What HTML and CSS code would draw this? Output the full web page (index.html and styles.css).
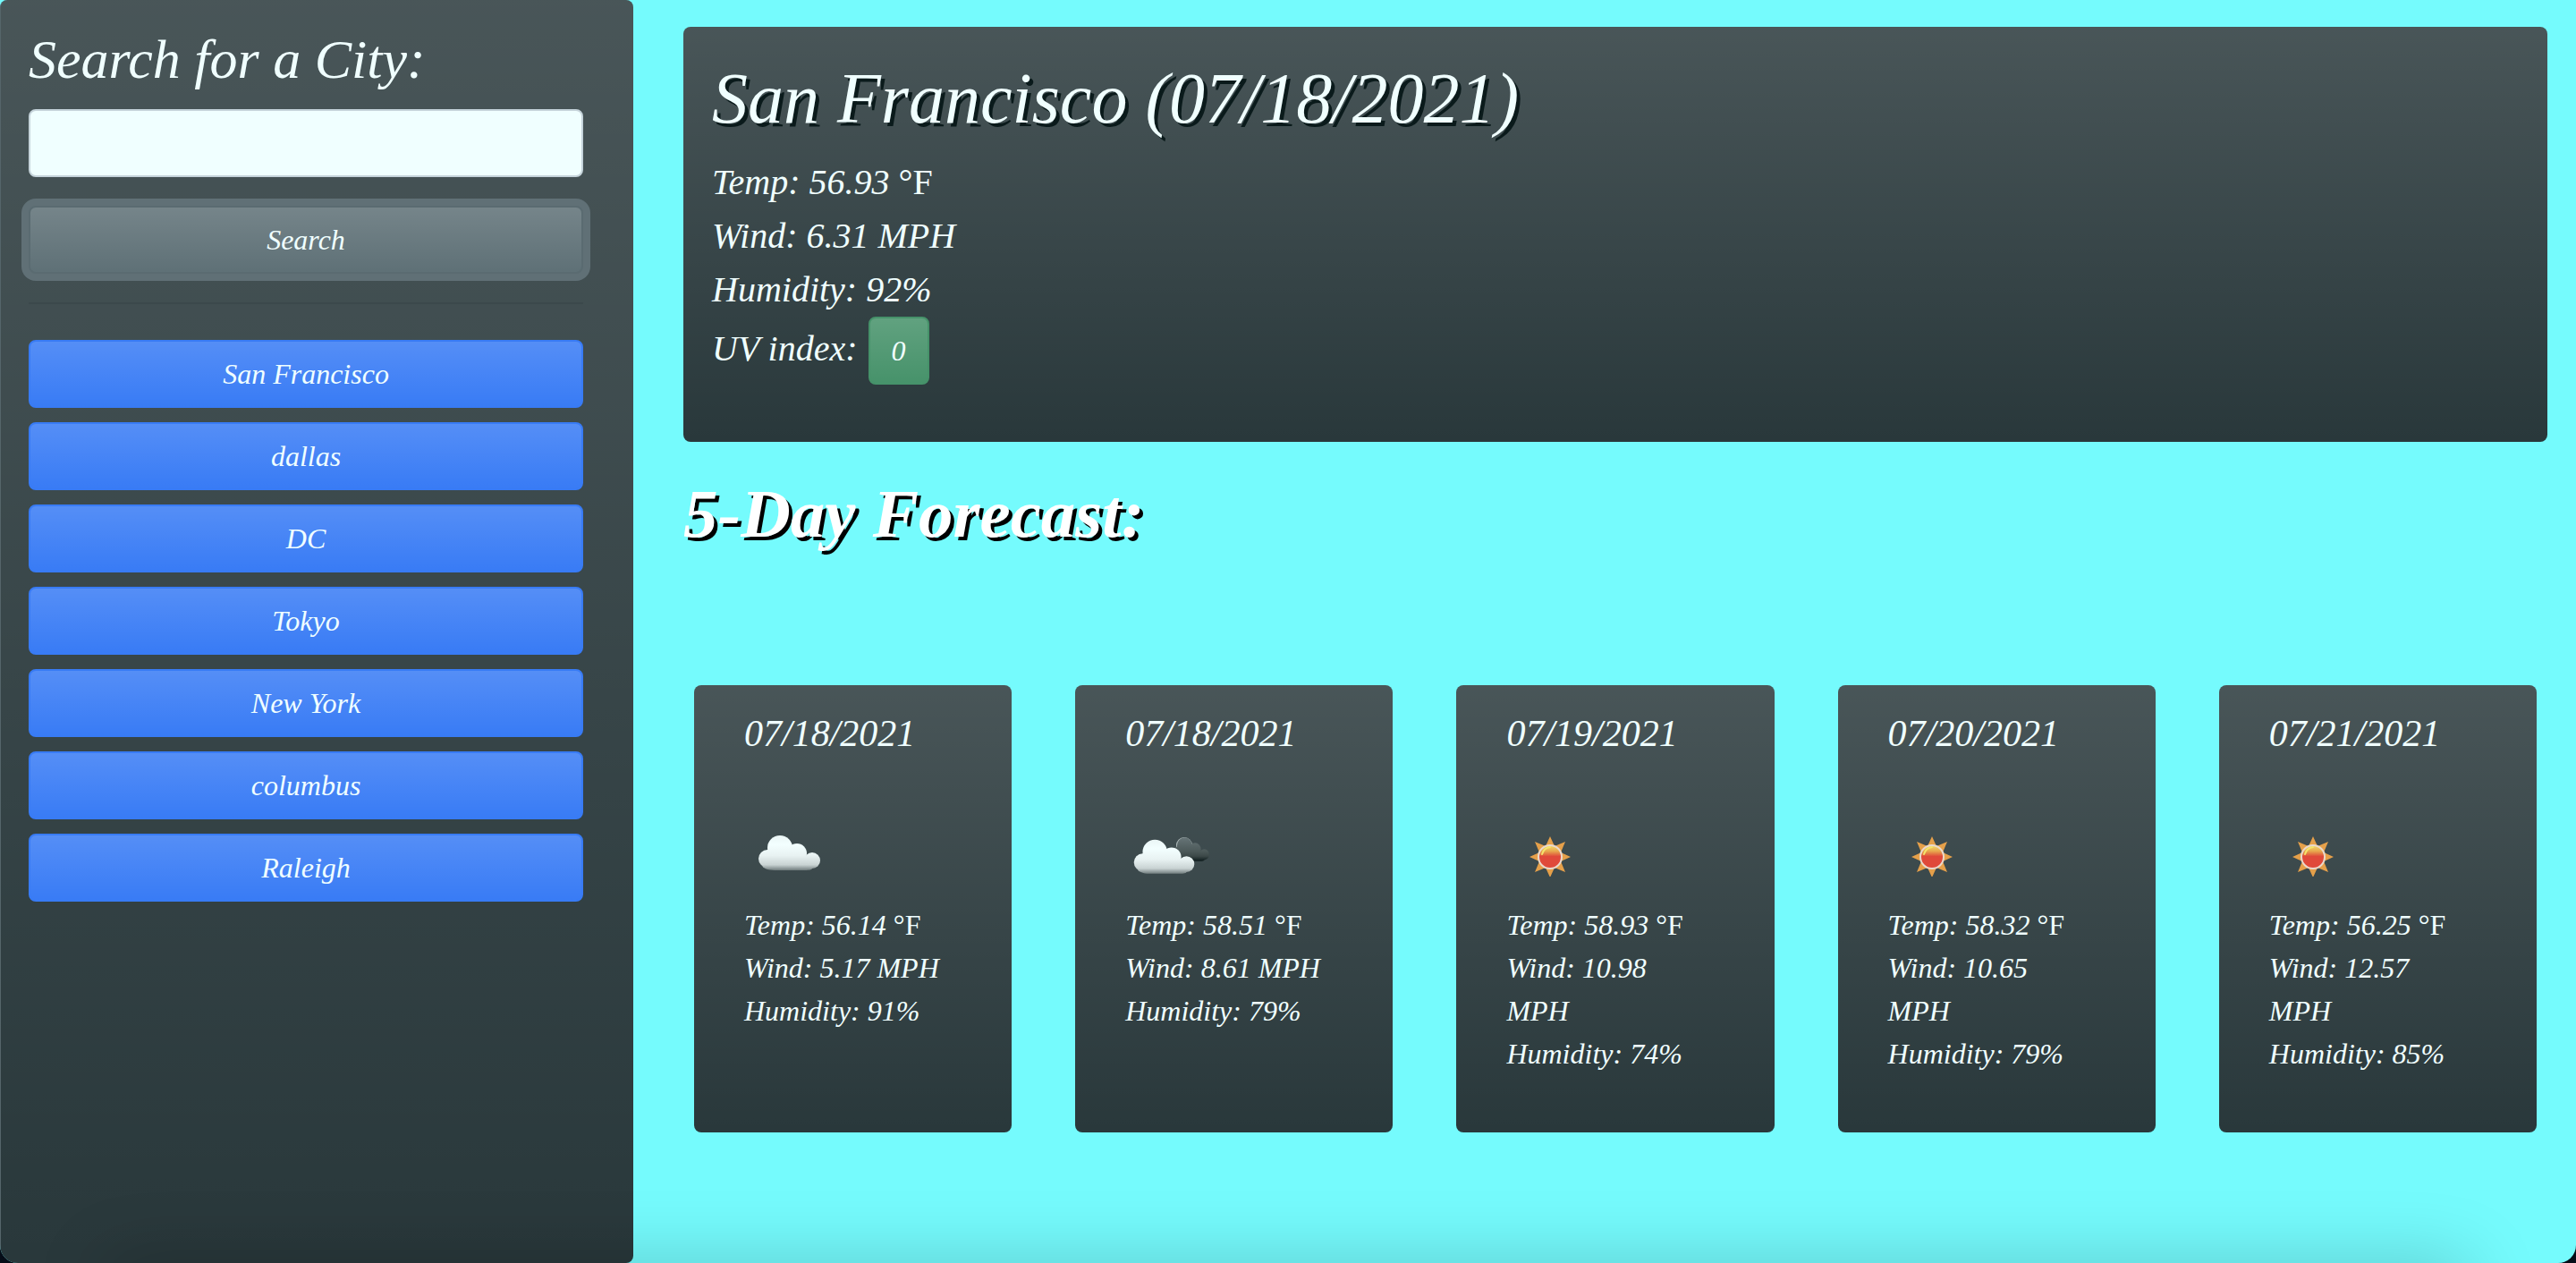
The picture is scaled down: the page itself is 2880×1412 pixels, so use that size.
FILE: index.html
```html
<!DOCTYPE html>
<html lang="en">
<head>
<meta charset="utf-8">
<meta name="viewport" content="width=device-width, initial-scale=1">
<title>Weather Dashboard</title>
<link rel="stylesheet" href="styles.css">
</head>
<body>
<svg class="defs" aria-hidden="true">
  <defs>
    <linearGradient id="cloudFill" x1="0" y1="16" x2="0" y2="57" gradientUnits="userSpaceOnUse">
      <stop offset="0" stop-color="#e9f4f4"/>
      <stop offset=".3" stop-color="#f3ffff"/>
      <stop offset=".6" stop-color="#e8f2f2"/>
      <stop offset=".85" stop-color="#c9d3d3"/>
      <stop offset="1" stop-color="#6f7b7c"/>
    </linearGradient>
    <linearGradient id="darkFill" x1="0" y1="16" x2="0" y2="57" gradientUnits="userSpaceOnUse">
      <stop offset="0" stop-color="#69777a"/>
      <stop offset=".6" stop-color="#4c5959"/>
      <stop offset=".8" stop-color="#3c4848"/>
      <stop offset="1" stop-color="#0c1a1b"/>
    </linearGradient>
    <linearGradient id="sunFill" x1="0" y1="0" x2="0" y2="1">
      <stop offset="0" stop-color="#f3dc6c"/>
      <stop offset=".25" stop-color="#e8a94e"/>
      <stop offset=".48" stop-color="#e0493a"/>
      <stop offset="1" stop-color="#e0493a"/>
    </linearGradient>
    <g id="cloudShape">
      <circle cx="26" cy="44" r="10"/>
      <circle cx="40" cy="32" r="14"/>
      <circle cx="59" cy="38" r="11"/>
      <circle cx="76" cy="46" r="9"/>
      <path d="M26 34l22-4 12 6 16 10v9c0 1-3 2-8 2H34c-8 0-14-3-14-6z"/>
    </g>
    <symbol id="cloud" viewBox="0 0 112 64"><use href="#cloudShape" fill="url(#cloudFill)"/></symbol>
    <symbol id="clouds" viewBox="0 0 112 64">
      <circle cx="66" cy="29" r="9" fill="#b4bfbf"/>
      <use href="#cloudShape" fill="url(#darkFill)" transform="translate(42 8) scale(.61 .68)"/>
      <use href="#cloudShape" fill="url(#cloudFill)" transform="translate(-6 5) scale(.98)"/>
    </symbol>
    <symbol id="sun" viewBox="0 0 112 64">
      <path fill="#e5a04a" d="M49 19l5 11 12-5-5 12 11 5-11 5 5 12-12-5-5 11-5-11-12 5 5-12-11-5 11-5-5-12 12 5z"/>
      <circle cx="49" cy="42" r="13" fill="url(#sunFill)" stroke="#ead9cc" stroke-width="2"/>
      <path d="M40 39q2-7 9-8" fill="none" stroke="#f4e56c" stroke-width="2" stroke-linecap="round"/>
    </symbol>
  </defs>
</svg>

<aside class="sidebar">
  <form class="search">
    <h2 class="search-title"><label for="city">Search for a City:</label></h2>
    <input class="search-input" id="city" type="text">
    <button class="btn btn-search" type="button">Search</button>
  </form>
  <hr class="divider">
  <div class="history">
    <button class="btn btn-city" type="button">San Francisco</button>
    <button class="btn btn-city" type="button">dallas</button>
    <button class="btn btn-city" type="button">DC</button>
    <button class="btn btn-city" type="button">Tokyo</button>
    <button class="btn btn-city" type="button">New York</button>
    <button class="btn btn-city" type="button">columbus</button>
    <button class="btn btn-city" type="button">Raleigh</button>
  </div>
</aside>

<main class="content">
  <section class="current panel">
    <h1 class="title">San Francisco (07/18/2021)</h1>
    <p>Temp: 56.93 <span class="unit">°F</span></p>
    <p>Wind: 6.31 MPH</p>
    <p>Humidity: 92%</p>
    <p class="uv">UV index: <button class="btn btn-uv" type="button">0</button></p>
  </section>

  <h2 class="title forecast-title">5-Day Forecast:</h2>

  <section class="forecast">
    <article class="day panel">
      <h3>07/18/2021</h3>
      <svg class="icon" role="img" aria-label="Cloudy"><use href="#cloud"/></svg>
      <p>Temp: 56.14 <span class="unit">°F</span></p>
      <p>Wind: 5.17 MPH</p>
      <p>Humidity: 91%</p>
    </article>
    <article class="day panel">
      <h3>07/18/2021</h3>
      <svg class="icon" role="img" aria-label="Broken clouds"><use href="#clouds"/></svg>
      <p>Temp: 58.51 <span class="unit">°F</span></p>
      <p>Wind: 8.61 MPH</p>
      <p>Humidity: 79%</p>
    </article>
    <article class="day panel">
      <h3>07/19/2021</h3>
      <svg class="icon" role="img" aria-label="Sunny"><use href="#sun"/></svg>
      <p>Temp: 58.93 <span class="unit">°F</span></p>
      <p>Wind: 10.98<br>MPH</p>
      <p>Humidity: 74%</p>
    </article>
    <article class="day panel">
      <h3>07/20/2021</h3>
      <svg class="icon" role="img" aria-label="Sunny"><use href="#sun"/></svg>
      <p>Temp: 58.32 <span class="unit">°F</span></p>
      <p>Wind: 10.65<br>MPH</p>
      <p>Humidity: 79%</p>
    </article>
    <article class="day panel">
      <h3>07/21/2021</h3>
      <svg class="icon" role="img" aria-label="Sunny"><use href="#sun"/></svg>
      <p>Temp: 56.25 <span class="unit">°F</span></p>
      <p>Wind: 12.57<br>MPH</p>
      <p>Humidity: 85%</p>
    </article>
  </section>
</main>
</body>
</html>
```
FILE: styles.css
```css
* {
  box-sizing: border-box;
}

html {
  background: #060d18;
}

body {
  position: relative;
  display: grid;
  grid-template-columns: 59fr 181fr;
  min-height: 100vh;
  margin: 0;
  overflow: hidden;
  border-radius: 0 0 20px 20px;
  background: #75fbfd;
  color: azure;
  font: italic 32px/48px "Apple Chancery", "Liberation Serif", serif;
}

/* soft shade along the foot of the window */
body::after {
  content: "";
  position: absolute;
  right: 120px;
  bottom: -60px;
  left: 120px;
  height: 60px;
  box-shadow: 0 0 80px 0 rgba(0, 0, 0, .22);
  pointer-events: none;
}

h1, h2, h3, p {
  margin: 0;
  font-weight: 400;
}

.defs {
  position: absolute;
  width: 0;
  height: 0;
}

.panel, .sidebar {
  border-radius: 8px;
  background: #29383b linear-gradient(rgba(255, 255, 255, .15), rgba(255, 255, 255, 0));
}

.sidebar {
  padding: 28px 56px 28px 31px;
  border-left: 1px solid #55656a;
}

.search {
  display: flex;
  flex-direction: column;
}

.search-title {
  margin-bottom: 18px;
  font-size: 62px;
  line-height: 76px;
}

.search-input {
  width: 100%;
  height: 76px;
  margin-bottom: 32px;
  padding: 12px 24px;
  border: 2px solid #c5d3da;
  border-radius: 8px;
  background: azure;
  font: inherit;
}

.btn {
  padding: 12px 24px;
  border: 2px solid;
  border-radius: 8px;
  color: azure;
  font: inherit;
  background-image: linear-gradient(rgba(255, 255, 255, .15), rgba(255, 255, 255, 0));
  background-origin: border-box;
}

.btn-search {
  border-color: #5a6b71;
  background-color: #5e7076;
  box-shadow: 0 0 0 8px #607076;
}

.divider {
  width: 100%;
  height: 2px;
  margin: 32px 0 40px;
  border: 0;
  background: #3b484b;
}

.history {
  display: grid;
  gap: 16px;
}

.btn-city {
  border-color: #387bf5;
  background-color: #387bf5;
}

.content {
  padding: 30px 32px;
  padding-left: 56px;
}

.current {
  padding: 32px 32px 64px;
  font-size: 40px;
  line-height: 60px;
}

.title {
  font-size: 80px;
  line-height: 96px;
  text-shadow: 4px 4px 0 #0a1a1b;
}

.current .title {
  margin-bottom: 16px;
}

.unit {
  font-family: "Liberation Serif", serif;
  font-style: normal;
}

.uv {
  display: flex;
  align-items: baseline;
  gap: 12px;
}

.btn-uv {
  border-color: #46926a;
  background-color: #46926a;
  font-size: 32px;
  line-height: 48px;
}

.forecast-title {
  margin: 32px 0 144px;
  color: #fff;
  font-size: 77px;
  font-weight: 700;
  text-shadow: 4px 4px 0 #000;
}

.forecast {
  display: grid;
  grid-template-columns: repeat(5, 1fr);
  gap: 71px;
  padding: 0 12px;
}

.day {
  min-height: 500px;
  padding: 30px 56px;
}

.day h3 {
  font-size: 42px;
  line-height: 48px;
}

.icon {
  display: block;
  width: 112px;
  height: 64px;
  margin: 72px 0 30px;
}
```
